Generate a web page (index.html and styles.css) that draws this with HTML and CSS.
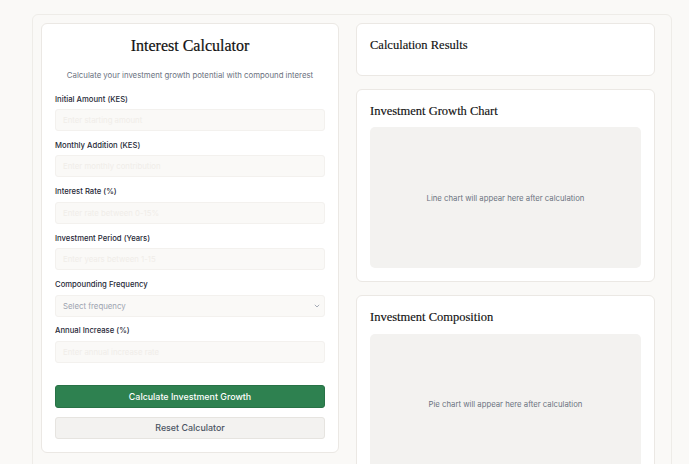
FILE: index.html
```html
<!DOCTYPE html>
<html lang="en">
<head>
<meta charset="utf-8">
<title>Interest Calculator</title>
<link rel="stylesheet" href="styles.css">
</head>
<body>
<div class="shell">
  <div class="grid">
    <section class="card calc">
      <h1 class="title">Interest Calculator</h1>
      <p class="subtitle">Calculate your investment growth potential with compound interest</p>
      <div class="field">
        <label class="label">Initial Amount (KES)</label>
        <input class="input" type="text" placeholder="Enter starting amount">
      </div>
      <div class="field">
        <label class="label">Monthly Addition (KES)</label>
        <input class="input" type="text" placeholder="Enter monthly contribution">
      </div>
      <div class="field">
        <label class="label">Interest Rate (%)</label>
        <input class="input" type="text" placeholder="Enter rate between 0-15%">
      </div>
      <div class="field">
        <label class="label">Investment Period (Years)</label>
        <input class="input" type="text" placeholder="Enter years between 1-15">
      </div>
      <div class="field">
        <label class="label">Compounding Frequency</label>
        <div class="select">
          <span>Select frequency</span>
          <svg class="chev" width="6" height="4" viewBox="0 0 6 4"><path d="M0.8 0.8 L3 3 L5.2 0.8" fill="none" stroke="#9ca3af" stroke-width="0.9"/></svg>
        </div>
      </div>
      <div class="field">
        <label class="label">Annual Increase (%)</label>
        <input class="input" type="text" placeholder="Enter annual increase rate">
      </div>
      <div class="actions">
        <button class="btn primary">Calculate Investment Growth</button>
        <button class="btn secondary">Reset Calculator</button>
      </div>
    </section>
    <div class="side">
      <section class="card">
        <h2 class="heading">Calculation Results</h2>
      </section>
      <section class="card">
        <h2 class="heading">Investment Growth Chart</h2>
        <div class="chart">Line chart will appear here after calculation</div>
      </section>
      <section class="card">
        <h2 class="heading">Investment Composition</h2>
        <div class="chart">Pie chart will appear here after calculation</div>
      </section>
    </div>
  </div>
</div>
</body>
</html>
```
FILE: styles.css
```css
* { box-sizing: border-box; }
html, body { margin: 0; padding: 0; }
body {
  background: #faf9f7;
  font-family: Inter, "Noto Sans", sans-serif;
  color: #1f2937;
  height: 464px;
  overflow: hidden;
}
.shell {
  margin: 14px 0 0 32px;
  width: 640px;
  border: 1px solid #eeece8;
  border-radius: 6px;
  background: #faf9f7;
  padding: 8px 16px 8px 8px;
}
.grid {
  display: grid;
  grid-template-columns: 298px 299px;
  column-gap: 17px;
  align-items: start;
}
.card {
  background: #ffffff;
  border: 1px solid #ebe8e4;
  border-radius: 6px;
  padding: 13px;
}
.title {
  margin: 0 0 14px;
  font-family: "Liberation Serif", serif;
  font-weight: normal;
  font-size: 16px;
  line-height: 18px;
  text-align: center;
  color: #111111;
  -webkit-text-stroke: 0.2px #111111;
}
.subtitle {
  margin: 0 0 12.5px;
  font-size: 7.8px;
  line-height: 12px;
  text-align: center;
  color: #6b7280;
}
.field { margin-bottom: 8.9px; }
.label {
  display: block;
  font-size: 7.7px;
  line-height: 11px;
  font-weight: 500;
  margin-bottom: 4.5px;
  color: #1f2937;
}
.input, .select {
  display: flex;
  align-items: center;
  width: 100%;
  height: 22px;
  margin: 0;
  padding: 0 7px;
  background: #faf9f7;
  border: 1px solid #f3f1ee;
  border-radius: 3px;
  font-family: Inter, sans-serif;
  font-size: 7.8px;
  color: #1f2937;
  outline: none;
}
.input::placeholder { color: #f0ede9; }
.select { justify-content: space-between; color: #9ca3af; padding-right: 4px; }
.chev { display: block; }
.actions {
  margin-top: 22px;
  display: flex;
  flex-direction: column;
  gap: 9px;
}
.btn {
  width: 100%;
  border-radius: 3px;
  font-family: Inter, sans-serif;
  font-size: 8.9px;
  font-weight: 500;
  padding: 0;
  margin: 0;
}
.primary {
  height: 23px;
  background: #2e8150;
  border: 1px solid #287246;
  color: #ffffff;
}
.secondary {
  height: 22px;
  background: #f3f2f0;
  border: 1px solid #e6e4e0;
  color: #4b5563;
}
.side {
  display: flex;
  flex-direction: column;
  gap: 13px;
}
.heading {
  margin: 0 0 7.5px;
  font-family: "Liberation Serif", serif;
  font-weight: normal;
  font-size: 12.5px;
  line-height: 17px;
  color: #111111;
  -webkit-text-stroke: 0.15px #111111;
}
.chart {
  height: 141px;
  background: #f3f2f0;
  border-radius: 5px;
  display: flex;
  align-items: center;
  justify-content: center;
  font-size: 7.75px;
  color: #6b7280;
}
```
